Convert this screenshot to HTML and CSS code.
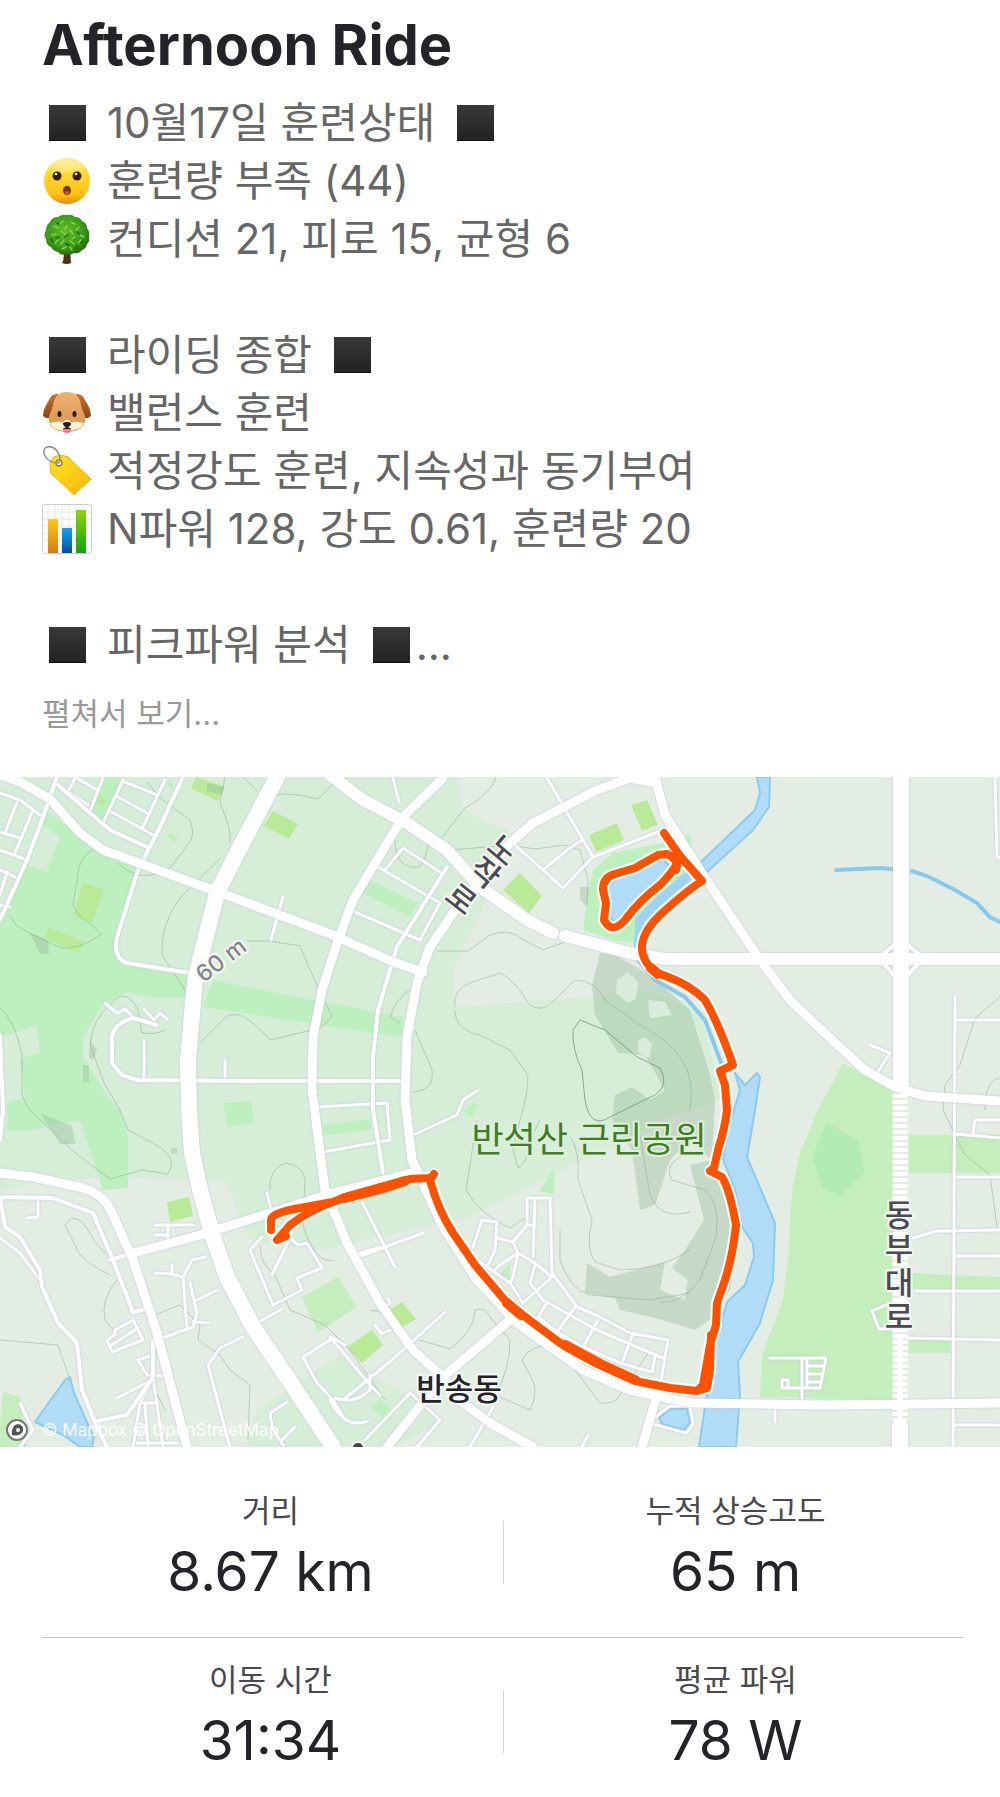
FILE: index.html
```html
<!DOCTYPE html>
<html lang="ko">

<head>
    <meta charset="UTF-8">
    <meta name="viewport" content="width=device-width, initial-scale=1.0">
    <title>Afternoon Ride</title>
    <link rel="stylesheet" href="styles.css">
</head>

<body>
    <!-- shared emoji -->
    <svg class="defs" width="0" height="0" aria-hidden="true">
        <defs>
            <linearGradient id="black" x1="0" y1="0" x2="0" y2="1">
                <stop offset="0" stop-color="#383838" />
                <stop offset="1" stop-color="#222" />
            </linearGradient>
            <linearGradient id="face" x1="0" y1="0" x2="0" y2="1">
                <stop offset="0" stop-color="#ffe98a" />
                <stop offset="0.3" stop-color="#ffdc38" />
                <stop offset="0.8" stop-color="#fdbf12" />
                <stop offset="1" stop-color="#e48a12" />
            </linearGradient>
            <radialGradient id="leaves" cx="0.45" cy="0.4" r="0.6">
                <stop offset="0" stop-color="#64b92e" />
                <stop offset="0.7" stop-color="#3c9a18" />
                <stop offset="1" stop-color="#257009" />
            </radialGradient>
            <linearGradient id="fur" x1="0" y1="0" x2="0" y2="1">
                <stop offset="0" stop-color="#eeb274" />
                <stop offset="1" stop-color="#d99249" />
            </linearGradient>
            <linearGradient id="ear" x1="0" y1="0" x2="0" y2="1">
                <stop offset="0" stop-color="#c4752c" />
                <stop offset="1" stop-color="#8a4611" />
            </linearGradient>
            <linearGradient id="gold" x1="0" y1="0" x2="0" y2="1">
                <stop offset="0" stop-color="#ffc918" />
                <stop offset="1" stop-color="#d47d07" />
            </linearGradient>
            <linearGradient id="blue" x1="0" y1="0" x2="0" y2="1">
                <stop offset="0" stop-color="#10a5ee" />
                <stop offset="1" stop-color="#0450a0" />
            </linearGradient>
            <linearGradient id="green" x1="0" y1="0" x2="0" y2="1">
                <stop offset="0" stop-color="#8ed60c" />
                <stop offset="1" stop-color="#14a010" />
            </linearGradient>
            <linearGradient id="tag" x1="0" y1="0" x2="1" y2="1">
                <stop offset="0" stop-color="#ffe11f" />
                <stop offset="1" stop-color="#f7b90b" />
            </linearGradient>
            <symbol id="square" viewBox="0 0 50 50">
                <rect x="7" y="7" width="37" height="36" fill="url(#black)" />
                <path d="M7 42.5H44" stroke="#111" />
            </symbol>
        </defs>
    </svg>

    <header class="post">
        <h1 class="title">Afternoon Ride</h1>

        <div class="description">
            <p><svg class="emoji"><use href="#square" /></svg><span>10월17일 훈련상태</span><svg class="emoji"><use href="#square" /></svg></p>
            <p>
                <svg class="emoji" viewBox="0 0 50 50">
                    <circle cx="25" cy="25" r="23" fill="url(#face)" />
                    <ellipse cx="25" cy="10" rx="15" ry="6" fill="#fff" opacity="0.25" />
                    <circle cx="15" cy="20" r="4.5" fill="#3b1d06" />
                    <circle cx="35" cy="20" r="4.5" fill="#3b1d06" />
                    <circle cx="14" cy="18" r="1.3" fill="#fff" />
                    <circle cx="34" cy="18" r="1.3" fill="#fff" />
                    <ellipse cx="25" cy="34.500" rx="4" ry="4.800" fill="#7c3508" />
                    <ellipse cx="25" cy="37" rx="2.500" ry="2" fill="#b45d25" />
                </svg>
                <span>훈련량 부족 (44)</span>
            </p>
            <p>
                <svg class="emoji" viewBox="0 0 50 50">
                    <path d="M22 36h6l1 13q-4 2-9 0 2-2 2-13z" fill="#4e3210" />
                    <path d="M25 1q5-1 8 2 5 0 7 4 5 2 5 7 3 4 2 8 1 5-2 8-1 5-5 6-3 4-8 3-4 3-8 1-5 2-8-2-5-1-7-5-5-2-5-8-3-4 0-9 0-5 4-8 2-5 8-5 4-3 9-2z" fill="url(#leaves)" />
                    <path d="M12 12l4 2M21 7l-3 3M29 8l4 2M37 13l-3 3M10 21l4-1M19 17l4 3M28 16l3 4M38 21l4 2M13 29l3-3M22 26l-3 4M28 27l4 3M36 29l3-3M20 35l4-2M30 36l-2-3M25 12l-2 3M33 23l-3 2" stroke="#86d44e" stroke-width="1.500" stroke-linecap="round" />
                    <path d="M15 9l2 1M26 21l-3 2M17 23l-3 1M35 18l2 2M24 30l3 1M34 34l1-2M9 25l2 3M41 27l-2 2" stroke="#1e6608" stroke-width="1.500" stroke-linecap="round" />
                </svg>
                <span>컨디션 21, 피로 15, 균형 6</span>
            </p>
            <br>
            <p><svg class="emoji"><use href="#square" /></svg><span>라이딩 종합</span><svg class="emoji"><use href="#square" /></svg></p>
            <p>
                <svg class="emoji" viewBox="0 0 50 50">
                    <path d="M16 6q-6-1-9 6-6 9-6 16 6 5 10-1l7-18zM34 6q6-1 9 6 6 9 6 16-6 5-10-1L32 9z" fill="url(#ear)" />
                    <path d="M25 4q12 0 14 13 1 5 4 11 2 15-18 16Q5 43 7 28q3-6 4-11Q13 4 25 4z" fill="url(#fur)" />
                    <path d="M8 35q6-2 13-1 4-5 8 0 7-1 13 1-3 8-17 8T8 35z" fill="#fbf0d2" />
                    <ellipse cx="17.500" cy="26" rx="2" ry="3" fill="#30180a" />
                    <ellipse cx="32.500" cy="26" rx="2" ry="3" fill="#30180a" />
                    <path d="M21 40h8q1 5-4 5t-4-5z" fill="#ff7089" />
                    <path d="M21 35q4-2 8 0 0 3-3 4l3 2h-8l3-2q-3-1-3-4z" fill="#241c1c" />
                </svg>
                <span>밸런스 훈련</span>
            </p>
            <p>
                <svg class="emoji" viewBox="0 0 50 50">
                    <path d="M8 20Q7 15 12 11q5-3 11-1 3 0 6 4l20 19-17 16L9 27z" fill="url(#tag)" stroke="#eab508" />
                    <circle cx="17" cy="17" r="3" fill="#fff" stroke="#9c8427" stroke-width="1.500" />
                    <path d="M17 17Q7 17 3 10 0 3 5 1q7-2 12 7 2 4 0 9" fill="none" stroke="#8c8c8c" stroke-width="1.500" />
                </svg>
                <span>적정강도 훈련, 지속성과 동기부여</span>
            </p>
            <p>
                <svg class="emoji" viewBox="0 0 50 50">
                    <rect x="0.500" y="0.500" width="49" height="49" rx="3" fill="#fdfdfd" stroke="#ccc9dc" />
                    <path d="M6 1v48M13 1v48M20 1v48M27 1v48M34 1v48M41 1v48M1 8h48M1 15h48M1 22h48M1 29h48M1 36h48M1 43h48" stroke="#e7e7ea" />
                    <path d="M6 15h10v34H6z" fill="url(#gold)" />
                    <path d="M20 24h10v25H20z" fill="url(#blue)" />
                    <path d="M34 6h10v43H34z" fill="url(#green)" />
                </svg>
                <span>N파워 128, 강도 0.61, 훈련량 20</span>
            </p>
            <br>
            <p><svg class="emoji"><use href="#square" /></svg><span>피크파워 분석</span><span class="cut"><svg class="emoji"><use href="#square" /></svg>...</span></p>
        </div>

        <button class="more" type="button">펼쳐서 보기...</button>
    </header>

    <svg class="map" viewBox="0 777 1000 670" role="img" aria-label="Afternoon Ride">
        <!-- land -->
        <path class="land" d="M0 777H458L462 807 487 823 510 830 480 915 453 970 455 1007 590 997 650 990 700 1010 722 1100 670 1117 470 1217 320 1250 250 1240 237 1212 227 1183 133 1178 43 1180 0 1192z" />
        <path class="land" d="M340 1355L257 1410 247 1447H395L445 1420 410 1395 370 1375z" />

        <!-- parks -->
        <g class="park">
            <path d="M48 812L80 837 103 853 138 868 115 947 127 965 190 977 185 998H153L127 992 103 1005 83 1037V1057L110 1100 120 1110 128 1137V1188L103 1190 80 1120 30 1130H7V1103L25 1097 20 1058 40 1053 37 1025 0 1037V920z" />
            <path d="M213 980L313 1000 403 1017 402 1037 340 1028 203 1007z" />
            <path d="M103 777H122L102 823 90 815zM223 1103L251 1101 254 1123 228 1127zM370 880L418 903 410 917 363 893zM323 1125L370 1119 371 1129 323 1136z" />
            <path d="M372 1407L380 1399 390 1407 382 1417zM170 833L178 837 175 842 167 837zM170 780L175 789 167 786zM554 1169V1194L539 1191zM510 1262V1280L500 1275zM463 1112L474 1102 478 1106 472 1117z" />
            <path d="M690 835L663 843 613 853 593 870 587 900 583 930 613 940 633 943 650 905 695 880z" />
        </g>
        <path class="land" d="M42 825L60 837 47 872 28 865z" />
        <g class="park-alt">
            <path d="M843 1063L860 1073 893 1090V1400L760 1397 762 1355 783 1300 788 1260 792 1190 800 1153 818 1110z" />
            <path d="M909 1135H1000V1173H909zM912 1273L1000 1277V1290H912zM909 1340H950V1353H909z" />
            <path d="M302 1297L338 1277 357 1307 318 1332zM3 1392L20 1397 27 1447H0V1425z" />
        </g>
        <path class="park-deep" d="M827 1123L858 1140 865 1172 840 1196 822 1187 812 1157z" />
        <g class="pitch">
            <path d="M631 805L647 800 658 825 642 831zM589 835L617 823 624 840 596 852zM520 873L542 896 529 913 503 890z" />
            <path d="M273 811L298 824 289 839 264 826zM196 777L225 787 218 801 191 788zM83 883L104 890 92 923 73 916zM48 927L85 942 78 953 45 938z" />
            <path d="M167 1202L189 1197 193 1216 170 1222zM390 1310L402 1302 416 1319 400 1329zM347 1347L372 1330 383 1345 362 1363zM100 795L107 801 103 806 96 803z" />
        </g>

        <!-- hillside -->
        <g class="hill">
            <path d="M600 953L615 955 650 975 690 1010 710 1075 715 1100 712 1160 690 1140 670 1160 655 1205 640 1210 632 1150 612 1120 615 1095 632 1087 650 1100 665 1090 645 1055 618 1053 595 1015 592 985z" />
            <path d="M712 1160L725 1200 738 1240 730 1290 712 1318 695 1330 655 1318 620 1310 615 1298 585 1293 587 1263 610 1277 665 1262 660 1290 685 1300 688 1280 672 1268 685 1250 704 1220 690 1165z" />
            <path d="M30 933L48 940 49 954 40 954zM40 1113L72 1126 76 1144 60 1144zM207 783L224 787 222 795 207 791zM83 1065H89V1082H83zM171 1148H177V1154H171zM90 1040L97 1050 93 1060 89 1058zM580 887H590L586 906 580 900z" />
        </g>
        <path class="clearing" d="M617 980L628 972 638 982 636 998 628 1003 616 993zM648 1000L665 1002 672 1015 650 1018zM638 1040L645 1037 652 1043 650 1058 638 1052z" />

        <!-- contour lines -->
        <g class="contour">
            <path d="M92 850Q78 860 78 875L73 905Q78 918 92 925L101 934Q80 950 62 948L33 935 17 926 9 915" />
            <path d="M147 782L160 798 190 820Q195 835 190 842L170 868Q140 885 118 863M225 777L220 803Q232 830 230 843M221 858L180 898Q160 925 162 955L185 990M243 777L258 792" />
            <path d="M276 795Q290 792 318 799L335 782M247 941L270 941 300 946 310 970 332 1017 320 1028 270 1040Q240 1005 225 1018L200 1043M0 1008Q15 1020 22 1055V1095Q28 1110 35 1115L75 1153 110 1179 142 1170 168 1174Q178 1160 160 1147L128 1130 120 1110 105 1085 90 1045Q92 1020 110 1005 125 985 138 1010L142 1033Q155 1035 165 1030" />
            <path d="M496 777Q490 795 465 808L440 840M395 840Q395 870 420 867 430 850 427 840M450 850L510 845 535 849 565 845 580 850 588 880 587 905M437 951H468L490 935Q510 928 520 938L543 950 570 940M413 987Q395 1000 390 1017L400 1023M415 1030L432 1070Q435 1090 413 1092" />
            <path d="M455 1007Q452 990 470 983L500 973Q515 980 528 1003 540 1015 555 1000L575 980Q595 980 605 1000L640 1025Q670 1040 682 1060 695 1080 690 1110M455 1010Q455 1030 480 1035L510 1050 528 1075Q528 1095 520 1120L513 1150 518 1168Q530 1160 530 1140L540 1120" />
            <path class="dark" d="M580 1020L573 1030Q572 1050 582 1070L585 1100Q590 1130 610 1117L655 1095Q670 1085 660 1068L637 1057 605 1030z" />
            <path d="M477 1120L466 1190Q480 1215 510 1228L530 1215M570 1137Q580 1150 578 1180L592 1220Q585 1250 595 1262L620 1270Q660 1270 690 1250M560 1230L560 1260Q570 1290 590 1295L650 1300 690 1293M640 1135L650 1195Q660 1220 690 1212M700 1150Q660 1160 672 1180L705 1190Q722 1205 715 1240L700 1280Q680 1305 660 1302" />
            <path d="M270 1190Q268 1170 285 1163 303 1165 305 1180L303 1225Q315 1265 335 1260M260 1245Q260 1265 275 1275L290 1310 325 1325 350 1350 385 1400M110 1275Q90 1265 80 1255L65 1225Q75 1210 88 1230 100 1255 120 1260M117 1280Q100 1300 105 1320L115 1332M155 1315L180 1305 200 1325 198 1340 220 1355 230 1370 250 1385 248 1440M0 1340L58 1345 69 1377M155 1390L165 1410" />
            <path d="M420 1340L450 1349Q475 1330 475 1310 485 1305 492 1320L510 1340Q510 1370 495 1395L530 1410Q540 1390 530 1375L522 1360Q530 1345 550 1345M575 1370L600 1403Q615 1405 620 1395L650 1350M370 1310Q390 1310 400 1335" />
            <path d="M1000 997L975 1018 960 1065 945 1085 943 1110 955 1135 965 1155 990 1175 997 1227M985 1110Q985 1080 1000 1078" />
        </g>

        <!-- water -->
        <g class="water">
            <path d="M757 777H770L769 807 753 830 707 872 700 863 755 810 760 793z" />
            <path d="M735 1073L745 1085 757 1073 760 1077 755 1110 747 1157 775 1223 773 1280 760 1323 738 1362 740 1395 736 1447H699L705 1407 710 1370 717 1340 727 1302 745 1285 754 1257 753 1243 742 1227 735 1190 723 1160 728 1130 740 1090z" />
            <path d="M608 885L620 872 663 860 672 868 678 868 672 880 637 903 618 925 608 915z" />
            <path d="M70 1377L74 1393 94 1438 92 1447H80L63 1435 35 1422 65 1380z" />
            <path d="M659 1418L670 1409 687 1409 690 1423 684 1430 662 1424z" />
        </g>
        <path class="stream wide" d="M695 870L660 900 640 920 638 950" />
        <path class="stream" d="M638 960L655 980 685 997 705 1020 722 1065M836 870L880 868 892 869M912 871L927 876 955 890 977 903 990 917 1000 922" />

        <!-- minor roads -->
        <g class="roads lane">
            <path d="M123 780L103 823M103 778L90 811M165 780L143 827M118 797L147 813M112 812L153 835M125 782L157 795M77 778L97 790M75 778L68 792 88 805" />
            <path d="M0 793L20 800 43 817M17 802L5 833M32 812L15 853M0 832L20 838M0 850L27 860M0 870L17 878M7 872L0 895M0 905L10 907" />
            <path d="M144 1040V1080M105 1003L117 1013 125 1009 133 1017M144 1009L154 1020 160 1013 167 1019M283 897L271 940M225 1060V1080" />
            <path d="M378 867L440 903 420 940 355 912M385 870L403 848 440 872M318 1107L387 1103 390 1140 323 1152M547 778L593 857 663 830M515 845L543 870 563 888 593 857M543 870L570 848 582 840M393 778L399 802M478 1090L463 1100 457 1115 413 1135" />
            <path d="M473 1247L482 1220 497 1222 495 1250 487 1267M527 1198H550L552 1273 577 1307 598 1316 630 1333 668 1340 660 1387M497 1238L513 1242 527 1225V1198M527 1225H534M535 1198L533 1257M513 1242L518 1253 535 1263 552 1277M477 1260L510 1283 523 1303 552 1277M518 1253L500 1265 493 1272M518 1253L513 1277 510 1283M535 1265L530 1283 543 1300 597 1330 663 1358M547 1303L538 1317 557 1332 583 1347 620 1363 652 1372 655 1357M575 1307L557 1332M598 1320L583 1347M633 1333L622 1363" />
            <path d="M445 1312L392 1360 343 1400M423 1233L358 1257 355 1255 380 1247M362 1202L395 1267M330 1337L370 1385 380 1395M365 1440L410 1393 440 1420 417 1447M493 1407L470 1447M330 1400Q345 1430 368 1421M370 1375V1390Q355 1405 335 1398M588 1435L582 1447M375 1325L382 1334 390 1330M388 1298L390 1303 380 1310" />
            <path d="M0 1238L20 1253 40 1280M38 1200V1217L27 1218M107 1340L115 1335V1330L133 1320 143 1340 112 1352zM110 1346L138 1328M157 1340L193 1327 197 1313 190 1283M187 1327L183 1277 192 1260 205 1257M155 1273L172 1274 183 1277M172 1274V1265M197 1300L217 1290M193 1322L209 1323M257 1323L282 1309M243 1337L220 1348 208 1365 230 1447M155 1225H193M168 1225V1240M155 1235H168" />
            <path d="M262 1237L250 1250 273 1305 302 1290 297 1278 322 1268 307 1243 298 1245 290 1238 272 1275M267 1193L272 1213M345 1345L333 1338 303 1357 317 1383 333 1400 345 1420M287 1402L270 1413 272 1427 283 1445M295 1427L282 1440M133 1447L140 1403 153 1377 163 1447M137 1443L177 1443M145 1405L148 1445M140 1403H157M117 1398L148 1382M153 1355L138 1360 147 1375 165 1376M20 1403L28 1420 33 1430 20 1447" />
            <path d="M955 997L953 1447M955 1020H1000M955 1134L1000 1138M973 1133L975 1120H1000M955 1177H1000M913 1238L937 1231 1000 1230M955 1256H1000M915 1291H1000M907 1338L1000 1340M953 1425H1000M995 778L997 857 1000 858M870 1045L890 1053 877 1073M770 1358H826L820 1388H782V1380H788V1388M802 1358V1400M807 1358V1388M807 1366H824M807 1374H822M807 1382H821M872 1311L888 1304M879 1329L872 1311M879 1329H890M775 1408V1422M653 1419L670 1406H690L693 1424 686 1433 653 1424" />
        </g>
        <g class="roads street">
            <path d="M183 777L160 827 138 870 117 937Q113 958 127 963L190 973M57 777L43 817 27 860 0 920M58 785L90 813 110 830 147 847M157 1025L133 1018Q110 1025 112 1042V1063L122 1075 137 1080 240 1081H405" />
            <path d="M447 867L397 947 378 1010 373 1057V1110L383 1173M0 1197L53 1198 93 1213 113 1260 133 1312 143 1310M0 1197L5 1227 20 1237 40 1270 42 1287 58 1323 77 1343 82 1390 97 1427 107 1447M97 1421L127 1415 153 1377V1340M0 1035L3 1110 0 1140M110 1260L130 1254" />
        </g>

        <!-- main roads -->
        <g class="roads">
            <path class="w9" d="M0 775L20 782 50 799 80 833 103 850 213 890 333 935 393 962 423 972" />
            <path class="w9" d="M443 778L403 817 377 860 353 900 337 943 322 990 313 1037 312 1090 325 1190 347 1243 380 1303 413 1350 443 1377 463 1403 490 1423 533 1447" />
            <path class="w9" d="M657 783L630 778 597 790 533 823 510 843 453 913 430 947 417 983 407 1037 405 1100 412 1160 443 1227 477 1280 517 1323 583 1370 630 1390 670 1399 693 1403 827 1405 1000 1403" />
            <path class="w9" d="M655 777L665 815 700 870 760 960 790 1000 830 1038 865 1070 895 1087 925 1096 1000 1101" />
            <path class="w9" d="M0 1173L33 1177 83 1188Q105 1195 112 1213L133 1260 157 1333 187 1447M510 1320L443 1377 387 1447" />
            <path class="w9" d="M130 1254L200 1235 270 1213 333 1193 415 1172M657 1395L642 1447" />
            <path class="w12" d="M325 771L363 800 407 823 447 850 480 887 527 920 553 933" />
            <path class="w12" d="M565 936L630 953 665 959H1000" />
            <path class="street" d="M883 954L893 946M919 954L909 946M884 964L893 974M918 964L909 974" />
            <path class="w17" d="M277 777L235 857 217 893 195 980 188 1060 189 1110 192 1153 200 1190 213 1237 227 1277 253 1327 287 1377 333 1447M901 777V1083M900 1425V1450" />
        </g>
        <path class="overpass" d="M900 1094V1420" />
        <path class="rail" d="M900 1335V1425" />

        <!-- ride -->
        <g class="route">
            <path id="ride" d="M664 833L680 856 702 881Q685 892 660 915 644 930 642 945 641 960 655 972L668 977Q690 985 705 1000 718 1022 733 1065L720 1071 725 1085 727 1110Q725 1128 718 1150L714 1168 710 1171 722 1177Q730 1190 736 1225 733 1255 725 1280L717 1303 716 1325 710 1345 703 1385 697 1391 670 1388 640 1382Q595 1365 560 1343L520 1313 507 1303 475 1265 453 1233Q438 1210 430 1180L434 1174M430 1178L410 1179 380 1187 345 1197 333 1202 300 1208Q271 1213 271 1220V1230M380 1187L333 1202Q310 1210 290 1225L277 1240 286 1236M680 856Q677 868 660 885 640 900 625 920 612 935 604 920L606 903 603 890Q603 877 615 874L635 868 658 855 667 854Q680 860 676 870M711 1335L710 1370 707 1388 697 1391" />
            <use href="#ride" class="line" />
            <path class="thick" d="M345 1198L380 1189 405 1181M507 1303L521 1315M565 1345L600 1364 635 1380M651 968L658 974" />
        </g>

        <!-- labels -->
        <g class="labels">
            <text class="contour-name" transform="translate(221 960) rotate(-37)" dy="8">60 m</text>
            <text transform="translate(503 850) rotate(40)" dy="11">노</text>
            <text transform="translate(485 873) rotate(40)" dy="11">작</text>
            <text transform="translate(461 899) rotate(38)" dy="11">로</text>
            <text x="899" y="1226">동</text>
            <text x="899" y="1260">부</text>
            <text x="899" y="1294">대</text>
            <text x="899" y="1328">로</text>
            <text class="park-name" x="589" y="1152">반석산 근린공원</text>
            <text class="town" x="459" y="1400">반송동</text>
            <path d="M353 1447Q354 1443 358 1443T363 1447z" fill="#444" />
        </g>
        <circle cx="17" cy="1430" r="10" fill="#fff" stroke="#777" stroke-width="2" />
        <path d="M12 1435Q11 1425 18 1424 24 1425 23 1431 20 1437 12 1435z" fill="#555" />
        <circle cx="18" cy="1430" r="2" fill="#fff" />
        <text class="credit" x="42" y="1436">© Mapbox © OpenStreetMap</text>
    </svg>

    <section class="stats">
        <div class="row">
            <div class="stat">
                <h2>거리</h2>
                <p>8.67 km</p>
            </div>
            <div class="stat">
                <h2>누적 상승고도</h2>
                <p>65 m</p>
            </div>
        </div>
        <div class="row">
            <div class="stat">
                <h2>이동 시간</h2>
                <p>31:34</p>
            </div>
            <div class="stat">
                <h2>평균 파워</h2>
                <p>78 W</p>
            </div>
        </div>
    </section>
</body>

</html>
```

FILE: styles.css
```css
body {
    margin: 0;
    background-color: #fff;
    color: #242428;
    font-family: Inter, 'Noto Sans CJK KR', sans-serif;
}

h1, h2, p {
    margin: 0;
}

.defs {
    position: absolute;
}

.post {
    padding: 12px 42px 43px;
}

.title {
    margin-bottom: 16px;
    font-size: 56px;
    line-height: 66px;
    font-weight: 700;
}

.description {
    color: #666;
    font-size: 42px;
    line-height: 58px;
}

.description p {
    display: flex;
    align-items: center;
    gap: 15px;
}

.emoji {
    flex: none;
    width: 50px;
    height: 50px;
}

.cut {
    display: flex;
    align-items: center;
}

.more {
    display: block;
    margin-top: 20px;
    padding: 0;
    border: none;
    background: none;
    color: #999;
    font-family: inherit;
    font-size: 31px;
    line-height: 40px;
    cursor: pointer;
}

/* map */
.map {
    display: block;
    width: 100%;
    background: #e4ede4;
}

.land {
    fill: #d6eed8;
}

.park {
    fill: #bdefbf;
}

.park-alt {
    fill: #c4eebc;
}

.park-deep {
    fill: #b2ebb4;
}

.pitch {
    fill: #b9ea98;
}

.hill {
    fill: #8fb58f;
    fill-opacity: 0.35;
}

.clearing {
    fill: #d9ecda;
}

.contour {
    fill: none;
    stroke: #8fa592;
    stroke-opacity: 0.5;
    stroke-linejoin: round;
}

.contour .dark {
    stroke: #6f8873;
    stroke-opacity: 0.7;
}

.water {
    fill: #b1dcf7;
    stroke: #8acbee;
    stroke-width: 2;
    stroke-linejoin: round;
}

.stream {
    fill: none;
    stroke: #86c9ec;
    stroke-width: 4;
    stroke-linecap: round;
}

.stream.wide {
    stroke: #9fd3f3;
    stroke-width: 9;
}

.roads {
    fill: none;
    stroke: #fff;
    stroke-linejoin: round;
    stroke-linecap: round;
    filter: drop-shadow(0 0 1px #bcc0dc);
}

.lane {
    stroke-width: 3;
}

.street {
    stroke-width: 4;
}

.w9 {
    stroke-width: 9;
}

.w12 {
    stroke-width: 12;
}

.w17 {
    stroke-width: 16;
}

.overpass {
    stroke: #fff;
    stroke-width: 15;
    stroke-dasharray: 4 2;
}

.rail {
    stroke: #fff;
    stroke-width: 5;
}

.route {
    fill: none;
    stroke: #fff;
    stroke-width: 12;
    stroke-linejoin: round;
    stroke-linecap: round;
}

.route .line {
    stroke: #fc5200;
    stroke-width: 8;
}

.route .thick {
    stroke: #fc5200;
    stroke-width: 10;
}

.labels {
    fill: #4a4a50;
    stroke: #f4f8f4;
    stroke-width: 4;
    stroke-linejoin: round;
    paint-order: stroke;
    font-size: 31px;
    font-weight: 500;
    text-anchor: middle;
}

.labels .contour-name {
    fill: #85858c;
    font-size: 23px;
}

.labels .park-name {
    fill: #3e7d20;
    stroke: #dcefdc;
    font-size: 35px;
    font-weight: 400;
}

.labels .town {
    fill: #222228;
}

.credit {
    fill: #fff;
    fill-opacity: 0.9;
    font-size: 17px;
}

/* stats */
.stats {
    padding: 22px 36px 0 42px;
}

.row {
    display: grid;
    grid-template-columns: 1fr 1fr;
    column-gap: 8px;
    padding: 18px 0 34px;
    background: linear-gradient(#d4d4da, #d4d4da) center 52px / 1px 63px no-repeat;
}

.row + .row {
    padding-bottom: 24px;
    border-top: 1px solid #c4c4cc;
}

.stat {
    text-align: center;
}

.stat h2 {
    color: #48484e;
    font-size: 31px;
    line-height: 48px;
    font-weight: 400;
}

.stat p {
    margin-top: 4px;
    font-size: 55px;
    line-height: 64px;
}
```
